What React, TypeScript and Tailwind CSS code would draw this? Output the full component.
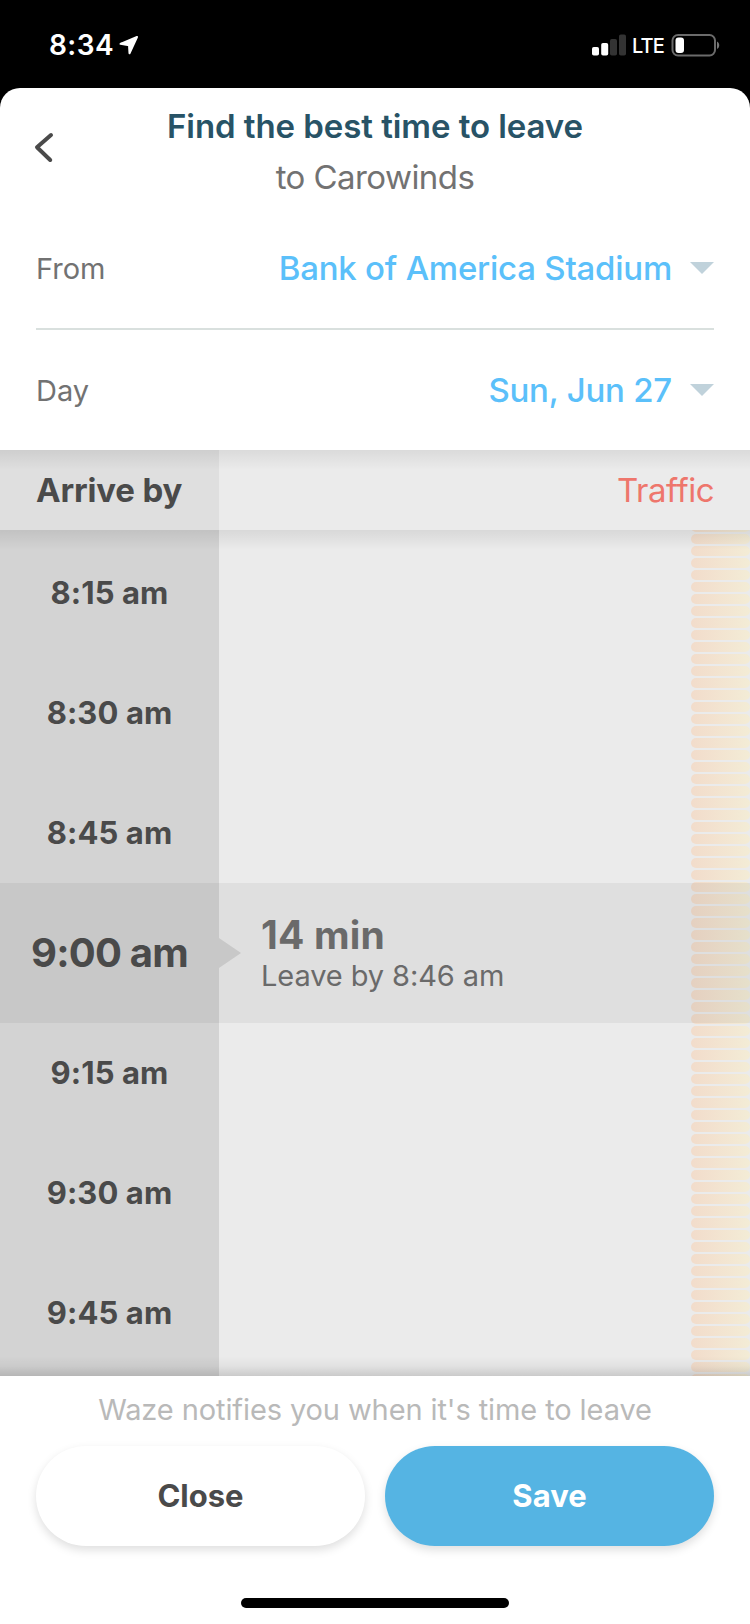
import { clsx } from 'clsx'

const times = ['8:15 am', '8:30 am', '8:45 am', '9:00 am', '9:15 am', '9:30 am', '9:45 am']
const selected = '9:00 am'

const bars = Array.from({ length: 72 }, (_, i) => i)

function StatusBar() {
  return (
    <div className="flex h-[88px] items-start justify-between bg-black pl-[49px] pr-[30px] pt-[30px] text-white">
      <div className="flex h-[30px] items-center">
        <span className="w-[70px] whitespace-nowrap text-[28px] font-semibold tracking-[0.015em]">8:34</span>
        <svg className="h-5 w-5" viewBox="0 0 20 20" fill="currentColor" stroke="currentColor" strokeWidth="2" strokeLinejoin="round">
          <path d="M18 2 1.500 8.800 10 10.200 10.500 18.300Z" />
        </svg>
      </div>
      <div className="flex h-[30px] items-center">
        <svg className="h-[22px] w-[35px]" viewBox="0 0 35 22" fill="currentColor">
          <rect x="0" y="13" width="7" height="8.500" rx="1.800" />
          <rect x="9.200" y="9" width="7" height="12.500" rx="1.800" />
          <rect x="18" y="5" width="7" height="16.500" rx="1.800" fill="#333" />
          <rect x="27" y="0.500" width="7" height="21" rx="1.800" fill="#333" />
        </svg>
        <span className="ml-[5px] w-[39px] whitespace-nowrap pt-0.5 text-[20px] font-medium tracking-[-0.045em]">LTE</span>
        <svg className="h-6 w-[49px]" viewBox="0 0 49 24">
          <rect x="1.500" y="2" width="42.500" height="20.500" rx="5.500" fill="none" stroke="#6b6b6b" strokeWidth="2" />
          <rect x="4.500" y="4.500" width="8.500" height="15.500" rx="3" fill="#fff" />
          <path d="M46 8.500c3 1.500 3 6 0 7.500Z" fill="#777" />
        </svg>
      </div>
    </div>
  )
}

function SheetHeader() {
  return (
    <header className="flex h-[120px]">
      <button className="flex w-[88px] items-center pl-[34px]" aria-label="Back">
        <svg className="h-8 w-5" viewBox="0 0 20 32" fill="none" stroke="#4a4a4a" strokeWidth="4" strokeLinecap="round" strokeLinejoin="round">
          <path d="M17 3 3 15.300 16.200 28" />
        </svg>
      </button>
      <div className="flex-1 pt-[13px] text-center">
        <h1 className="text-[33px] font-semibold leading-[50px] tracking-[-0.002em] text-[#285366]">Find the best time to leave</h1>
        <p className="text-[33px] leading-[52px] tracking-[-0.017em] text-[#727272]">to Carowinds</p>
      </div>
      <div className="w-[88px]" />
    </header>
  )
}

function PickerRow({ label, value, border }: { label: string; value: string; border?: boolean }) {
  return (
    <div className={clsx('mx-9 flex items-center', border ? 'h-[122px] border-b-2 border-[#d9e0de]' : 'h-[120px]')}>
      <span className="pt-0.5 text-[29px] text-[#727272]">{label}</span>
      <span className="ml-auto pt-0.5 text-[33px] font-medium tracking-[-0.007em] text-[#5bc0fa]">{value}</span>
      <svg className="ml-[18px] h-3 w-6" viewBox="0 0 24 12" fill="#c0d2db">
        <path d="M0 0h24L12 12Z" />
      </svg>
    </div>
  )
}

function Timeline() {
  return (
    <div className="relative flex h-[846px] overflow-hidden bg-[#ebebeb]">
      <div className="w-[219px] bg-[#d3d3d3] pt-[3px]">
        {times.map((time) => (
          <div
            key={time}
            className={clsx(
              'relative z-20 flex h-[120px] items-center justify-center whitespace-nowrap font-bold text-[#4a4a4a]',
              time === selected ? 'text-[40px] tracking-[-0.02em]' : 'text-[31px] tracking-[0.003em]',
            )}
          >
            {time}
          </div>
        ))}
      </div>
      <div className="flex-1" />
      <div className="-mt-2 w-[59px]">
        {bars.map((i) => (
          <div key={i} className="mb-[2px] h-[10px] rounded-[5px] bg-linear-to-r from-[#f2dccb] to-[#f3ecd6]" />
        ))}
      </div>

      {/* selected slot band */}
      <div className="absolute inset-x-0 top-[353px] z-10 flex h-[140px] items-center bg-black/5">
        <svg className="ml-[219px] h-[30px] w-[22px]" viewBox="0 0 22 30" fill="#c8c8c8">
          <path d="M0 0 22 15 0 30Z" />
        </svg>
        <div className="ml-5 pt-[6px] text-[#6a6a6a]">
          <p className="text-[39px] font-bold leading-[39px] tracking-[0.005em]">14 min</p>
          <p className="text-[29px] leading-[44px] tracking-[-0.003em]">Leave by 8:46 am</p>
        </div>
      </div>

      <div className="absolute inset-x-0 top-0 h-5 bg-linear-to-b from-black/8 to-transparent" />
      <div className="absolute inset-x-0 bottom-0 h-5 bg-linear-to-t from-black/14 via-black/4 to-transparent" />
    </div>
  )
}

export default function App() {
  return (
    <div className="h-[1624px] w-[750px] overflow-hidden bg-black font-['Inter',sans-serif]">
      <StatusBar />
      <main className="flex h-[1536px] flex-col rounded-t-[20px] bg-white">
        <SheetHeader />
        <PickerRow label="From" value="Bank of America Stadium" border />
        <PickerRow label="Day" value="Sun, Jun 27" />

        <div className="flex h-20 items-center bg-[#ebebeb] bg-[linear-gradient(to_bottom,rgba(0,0,0,0.07),transparent_20px)]">
          <div className="flex h-full w-[219px] items-center bg-black/5 pl-9">
            <span className="whitespace-nowrap pt-0.5 text-[33px] font-bold tracking-[-0.005em] text-[#4a4a4a]">Arrive by</span>
          </div>
          <span className="ml-auto pr-9 pt-0.5 text-[33px] tracking-[-0.015em] text-[#ee766c]">Traffic</span>
        </div>

        <Timeline />

        <footer className="flex flex-1 flex-col items-center bg-white pt-[14px]">
          <p className="text-[29px] leading-[40px] tracking-[-0.0035em] text-[#b9b9b9]">Waze notifies you when it's time to leave</p>
          <div className="mt-4 flex w-full gap-5 px-9">
            <button className="h-[100px] flex-1 rounded-full bg-white text-[31px] font-bold text-[#4a4a4a] shadow-[0_4px_10px_rgba(0,0,0,0.13)]">
              Close
            </button>
            <button className="h-[100px] flex-1 rounded-full bg-[#55b4e3] text-[31px] font-bold text-white shadow-[0_4px_10px_rgba(0,0,0,0.13)]">
              Save
            </button>
          </div>
          <div className="mt-[52px] h-[10px] w-[268px] rounded-full bg-black" />
        </footer>
      </main>
    </div>
  )
}
